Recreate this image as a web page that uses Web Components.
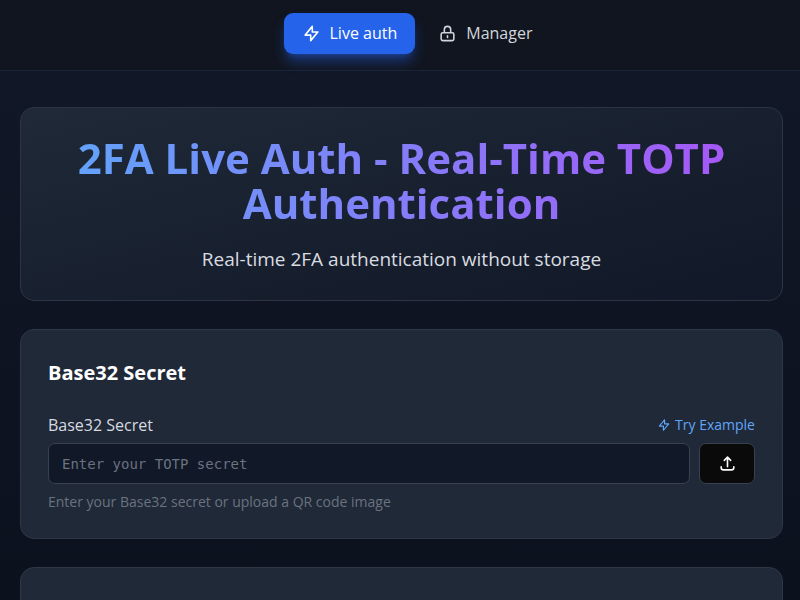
<!DOCTYPE html>
<html lang="en">
<head>
<meta charset="utf-8">
<meta name="viewport" content="width=device-width, initial-scale=1">
<title>2FA Live Auth</title>
<style>
body {
  margin: 0;
  min-height: 100vh;
  background: linear-gradient(to bottom, #111827, #0c111e);
  background-attachment: fixed;
  color: #e5e7eb;
  font-family: "Open Sans", "Noto Sans", sans-serif;
  overflow-x: hidden;
}
main {
  display: flex;
  flex-direction: column;
  gap: 28px;
  padding: 36px 17px 28px 20px;
}
</style>
</head>
<body>
<app-header>
  <nav-tab icon="bolt" href="#live" active>Live auth</nav-tab>
  <nav-tab icon="lock" href="#manager">Manager</nav-tab>
</app-header>
<main>
  <hero-card>
    <span slot="title">2FA Live Auth - Real-Time TOTP Authentication</span>
    Real-time 2FA authentication without storage
  </hero-card>
  <panel-card heading="Base32 Secret">
    <secret-form></secret-form>
  </panel-card>
  <panel-card></panel-card>
</main>

<script>
const icons = {
  bolt: `<path d="M13 10V3L4 14h7v7l9-11h-7z"/>`,
  lock: `<path d="M12 15v2m-6 4h12a2 2 0 0 0 2-2v-6a2 2 0 0 0-2-2H6a2 2 0 0 0-2 2v6a2 2 0 0 0 2 2zm10-10V7a4 4 0 0 0-8 0v4h8z"/>`,
  upload: `<path d="M4 16v1a3 3 0 0 0 3 3h10a3 3 0 0 0 3-3v-1m-4-8-4-4m0 0L8 8m4-4v12"/>`,
};

class UiIcon extends HTMLElement {
  connectedCallback() {
    this.attachShadow({ mode: "open" }).innerHTML = `<style>
      :host { display: block; flex: none; width: 19px; height: 19px; }
      svg {
        display: block;
        width: 100%;
        height: 100%;
        fill: none;
        stroke: currentColor;
        stroke-width: 2;
        stroke-linecap: round;
        stroke-linejoin: round;
      }
    </style>
    <svg viewBox="0 0 24 24" aria-hidden="true">${icons[this.getAttribute("name")]}</svg>`;
  }
}

class AppHeader extends HTMLElement {
  constructor() {
    super();
    this.attachShadow({ mode: "open" }).innerHTML = `<style>
      :host {
        display: block;
        background: #11151f;
        border-bottom: 1px solid #1b2432;
      }
      nav {
        display: flex;
        justify-content: center;
        gap: 5px;
        padding: 13px 0 16px 34px;
      }
    </style>
    <nav><slot></slot></nav>`;
  }
}

class NavTab extends HTMLElement {
  connectedCallback() {
    this.attachShadow({ mode: "open" }).innerHTML = `<style>
      :host { display: block; }
      a {
        display: flex;
        align-items: center;
        gap: 9px;
        padding: 0 18px;
        border-radius: 9px;
        color: #d1d5db;
        font-size: 16px;
        font-weight: 500;
        line-height: 41px;
        text-decoration: none;
      }
      :host([active]) a {
        color: #fff;
        background: #2563eb;
        box-shadow: 0 9px 14px -2px rgba(37, 99, 235, .45), 0 4px 6px -4px rgba(37, 99, 235, .4);
      }
    </style>
    <a href="${this.getAttribute("href")}"><ui-icon name="${this.getAttribute("icon")}"></ui-icon><slot></slot></a>`;
  }
}

class HeroCard extends HTMLElement {
  constructor() {
    super();
    this.attachShadow({ mode: "open" }).innerHTML = `<style>
      :host {
        display: block;
        padding: 27px;
        border: 1px solid #2c3542;
        border-radius: 14px;
        background: linear-gradient(to bottom right, #1f2937, #111827);
        text-align: center;
      }
      h1 {
        width: fit-content;
        margin: 0 auto 20px;
        font-size: 42px;
        font-weight: 700;
        line-height: 45px;
        color: transparent;
        background: linear-gradient(to right, #60a5fa, #a855f7);
        -webkit-background-clip: text;
        background-clip: text;
      }
      p {
        margin: 0;
        font-size: 19px;
        line-height: 28px;
        color: #d9dce1;
      }
    </style>
    <h1><slot name="title"></slot></h1>
    <p><slot></slot></p>`;
  }
}

class PanelCard extends HTMLElement {
  connectedCallback() {
    const heading = this.getAttribute("heading");
    this.attachShadow({ mode: "open" }).innerHTML = `<style>
      :host {
        display: block;
        min-height: 150px;
        padding: 27px;
        border: 1px solid #2d3745;
        border-radius: 14px;
        background: #1f2937;
      }
      h2 {
        margin: 0 0 26px;
        font-size: 20px;
        font-weight: 700;
        line-height: 32px;
        color: #fff;
      }
    </style>
    ${heading ? `<h2>${heading}</h2>` : ""}
    <slot></slot>`;
  }
}

class SecretForm extends HTMLElement {
  constructor() {
    super();
    this.attachShadow({ mode: "open" }).innerHTML = `<style>
      :host { display: block; }
      .top {
        display: flex;
        align-items: center;
        justify-content: space-between;
        margin-bottom: 8px;
        line-height: 20px;
      }
      label {
        font-size: 16px;
        color: #d7dae0;
      }
      button {
        font: inherit;
        cursor: pointer;
      }
      .example {
        display: flex;
        align-items: center;
        gap: 4px;
        padding: 0;
        border: 0;
        background: none;
        color: #60a5fa;
        font-size: 14px;
        line-height: 20px;
      }
      .example ui-icon {
        width: 14px;
        height: 14px;
      }
      .row {
        display: flex;
        gap: 9px;
      }
      input, .upload {
        box-sizing: border-box;
        height: 41px;
        border: 1px solid #374151;
        border-radius: 7px;
      }
      input {
        flex: 1;
        min-width: 0;
        padding: 0 13px;
        background: #111827;
        color: #fff;
        font-family: "DejaVu Sans Mono", monospace;
        font-size: 14px;
      }
      input::placeholder { color: #6b7280; }
      .upload {
        display: flex;
        align-items: center;
        justify-content: center;
        width: 56px;
        padding: 0;
        background: #0a0a0a;
        color: #fff;
      }
      p {
        margin: 8px 0 0;
        font-size: 14px;
        line-height: 19px;
        color: #6b7280;
      }
    </style>
    <div class="top">
      <label for="secret">Base32 Secret</label>
      <button class="example" type="button"><ui-icon name="bolt"></ui-icon>Try Example</button>
    </div>
    <div class="row">
      <input id="secret" type="text" placeholder="Enter your TOTP secret" autocomplete="off" aria-describedby="hint">
      <button class="upload" type="button" aria-label="Upload QR code image"><ui-icon name="upload"></ui-icon></button>
    </div>
    <p id="hint">Enter your Base32 secret or upload a QR code image</p>`;
  }
}

customElements.define("ui-icon", UiIcon);
customElements.define("app-header", AppHeader);
customElements.define("nav-tab", NavTab);
customElements.define("hero-card", HeroCard);
customElements.define("panel-card", PanelCard);
customElements.define("secret-form", SecretForm);
</script>
</body>
</html>
